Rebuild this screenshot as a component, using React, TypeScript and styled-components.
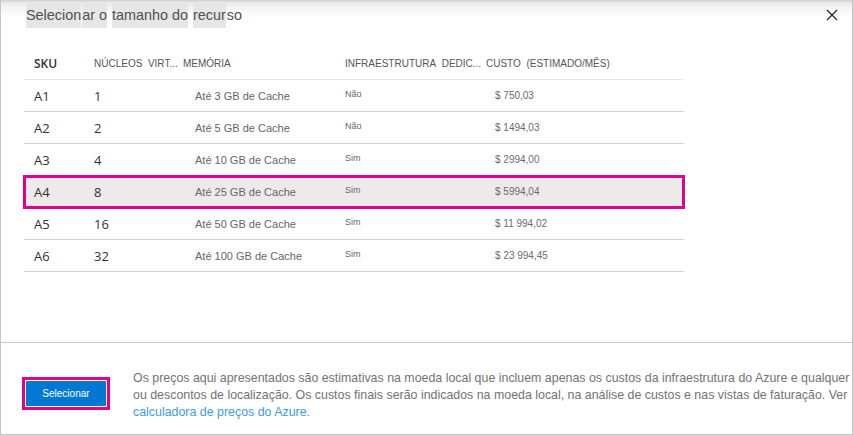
import styled, { createGlobalStyle } from 'styled-components'

interface SkuRow {
  sku: string
  cores: number
  memory: string
  dedicated: string
  cost: string
}

const rows: SkuRow[] = [
  { sku: 'A1', cores: 1, memory: 'Até 3 GB de Cache', dedicated: 'Não', cost: '$ 750,03' },
  { sku: 'A2', cores: 2, memory: 'Até 5 GB de Cache', dedicated: 'Não', cost: '$ 1494,03' },
  { sku: 'A3', cores: 4, memory: 'Até 10 GB de Cache', dedicated: 'Sim', cost: '$ 2994,00' },
  { sku: 'A4', cores: 8, memory: 'Até 25 GB de Cache', dedicated: 'Sim', cost: '$ 5994,04' },
  { sku: 'A5', cores: 16, memory: 'Até 50 GB de Cache', dedicated: 'Sim', cost: '$ 11 994,02' },
  { sku: 'A6', cores: 32, memory: 'Até 100 GB de Cache', dedicated: 'Sim', cost: '$ 23 994,45' },
]

const SELECTED = 'A4'

const App = () => {
  return (
    <>
      <GlobalStyle />
      <Dialog>
        <Header>
          <Title>
            <Mark>Selecion</Mark>
            <Mark>ar o</Mark> <Mark>tamanho do</Mark> <Mark>recur</Mark>so
          </Title>
          <CloseButton aria-label="Fechar">
            <svg width="12" height="12" viewBox="0 0 12 12">
              <path d="M1 1 L11 11 M11 1 L1 11" stroke="#222" strokeWidth="1.2" fill="none" />
            </svg>
          </CloseButton>
        </Header>

        <Body>
          <Table>
            <HeadRow>
              <SkuHead>SKU</SkuHead>
              <HeadCell>NÚCLEOS&nbsp; VIRT...</HeadCell>
              <HeadCell>MEMÓRIA</HeadCell>
              <HeadCell>INFRAESTRUTURA&nbsp; DEDIC...</HeadCell>
              <HeadCell>CUSTO&nbsp; (ESTIMADO/MÊS)</HeadCell>
            </HeadRow>
            {rows.map((row) => (
              <Row key={row.sku} $selected={row.sku === SELECTED}>
                <SkuCell>{row.sku}</SkuCell>
                <CoreCell>{row.cores}</CoreCell>
                <MemoryCell>{row.memory}</MemoryCell>
                <FlagCell>{row.dedicated}</FlagCell>
                <CostCell>{row.cost}</CostCell>
              </Row>
            ))}
          </Table>
        </Body>

        <Footer>
          <Highlight>
            <PrimaryButton>Selecionar</PrimaryButton>
          </Highlight>
          <Notice>
            Os preços aqui apresentados são estimativas na moeda local que incluem apenas os custos da infraestrutura do Azure e qualquer
            <br />
            ou descontos de localização. Os custos finais serão indicados na moeda local, na análise de custos e nas vistas de faturação. Ver
            <br />
            <Link href="#">calculadora de preços do Azure.</Link>
          </Notice>
        </Footer>
      </Dialog>
    </>
  )
}

export default App

// styled-components
const GlobalStyle = createGlobalStyle`
  html, body {
    margin: 0;
    padding: 0;
    background: #ffffff;
  }
  * {
    box-sizing: border-box;
  }
`

const Dialog = styled.div`
  display: flex;
  flex-direction: column;
  width: 853px;
  height: 435px;
  border-left: 1px solid #c4c4c4;
  border-right: 1px solid #c4c4c4;
  border-bottom: 1px solid #c4c4c4;
  background: #ffffff;
  font-family: 'Liberation Sans', Arial, sans-serif;
`

const Header = styled.div`
  display: flex;
  align-items: center;
  justify-content: space-between;
  height: 30px;
  padding: 0 4px 0 25px;
  background: linear-gradient(to bottom, #cfcfcf 0, #ececec 3px, #fafafa 12px, #ffffff 20px);
`

const Title = styled.h1`
  margin: 0;
  font-size: 14.4px;
  font-weight: normal;
  color: #505050;
  white-space: nowrap;
`

const Mark = styled.span`
  background: #e6e6e6;
  padding: 4px 0 5px;
  margin-right: 1px;
`

const CloseButton = styled.button`
  display: flex;
  align-items: center;
  justify-content: center;
  width: 24px;
  height: 24px;
  margin-right: 4px;
  padding: 0;
  border: none;
  background: transparent;
`

const Body = styled.div`
  flex: 1;
  padding: 18px 0 0 23px;
`

const Table = styled.div`
  width: 660px;
`

const columns = '60px 89px 162px 141px 1fr'

const HeadRow = styled.div`
  display: grid;
  grid-template-columns: ${columns};
  align-items: center;
  height: 32px;
  padding-left: 10px;
  border-bottom: 1px solid #e6e6e6;
`

const HeadCell = styled.div`
  font-size: 10px;
  color: #555555;
  white-space: nowrap;
`

const SkuHead = styled.div`
  font-family: 'Open Sans', 'Noto Sans', sans-serif;
  font-size: 12px;
  font-weight: 600;
  color: #323130;
`

const Row = styled.div<{ $selected?: boolean }>`
  display: grid;
  grid-template-columns: ${columns};
  align-items: center;
  height: 32px;
  padding-left: 10px;
  border-bottom: 1px solid #d2d2d2;
  background: ${(p) => (p.$selected ? '#edebe9' : 'transparent')};
  outline: ${(p) => (p.$selected ? '3px solid #e3008c' : 'none')};
  outline-offset: -2px;
`

const SkuCell = styled.div`
  padding-top: 1px;
  font-family: 'Open Sans', 'Noto Sans', sans-serif;
  font-size: 13px;
  color: #323130;
`

const CoreCell = styled(SkuCell)``

const MemoryCell = styled.div`
  padding-left: 12px;
  padding-top: 1px;
  font-size: 11px;
  color: #666666;
  white-space: nowrap;
`

const FlagCell = styled.div`
  margin-bottom: 3px;
  font-size: 9px;
  color: #666666;
`

const CostCell = styled.div`
  padding-left: 9px;
  font-size: 10px;
  color: #6a6a6a;
  white-space: nowrap;
`

const Footer = styled.div`
  display: flex;
  align-items: flex-start;
  gap: 23px;
  height: 92px;
  padding: 27px 0 0 21px;
  border-top: 1px solid #c8c8c8;
`

const Highlight = styled.div`
  margin-top: 7px;
  padding: 1px;
  border: 3px solid #e3008c;
`

const PrimaryButton = styled.button`
  width: 80px;
  height: 25px;
  padding: 0;
  border: none;
  border-radius: 1px;
  background: #0078d4;
  color: #ffffff;
  font-family: 'Liberation Sans', Arial, sans-serif;
  font-size: 10px;
`

const Notice = styled.p`
  margin: 0;
  font-size: 12.4px;
  line-height: 17px;
  color: #737373;
  white-space: nowrap;
`

const Link = styled.a`
  color: #3e9be0;
  text-decoration: none;
`
